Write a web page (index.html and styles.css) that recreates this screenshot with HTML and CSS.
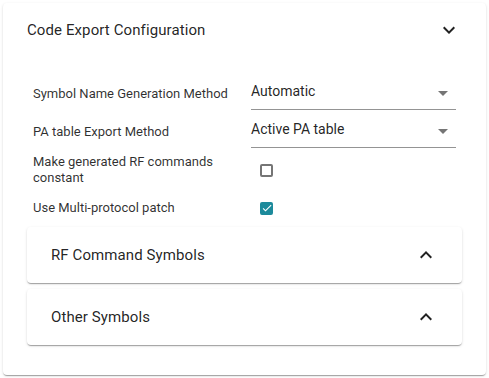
FILE: index.html
```html
<!DOCTYPE html>
<html>
<head>
<meta charset="utf-8">
<link rel="stylesheet" href="styles.css">
</head>
<body>
<div class="card">
  <div class="summary">
    <span class="title">Code Export Configuration</span>
    <svg class="chev" viewBox="0 0 24 24"><path d="M16.59 8.59 12 13.17 7.41 8.59 6 10l6 6 6-6z"/></svg>
  </div>
  <div class="details">
    <div class="form">
      <div class="label">Symbol Name Generation Method</div>
      <div class="select"><span>Automatic</span><svg class="arrow" viewBox="0 0 24 24"><path d="M7 10l5 5 5-5z"/></svg></div>
      <div class="label">PA table Export Method</div>
      <div class="select"><span>Active PA table</span><svg class="arrow" viewBox="0 0 24 24"><path d="M7 10l5 5 5-5z"/></svg></div>
      <div class="label two">Make generated RF commands constant</div>
      <div class="check-cell"><span class="box"></span></div>
      <div class="label">Use Multi-protocol patch</div>
      <div class="check-cell"><span class="box checked"><svg viewBox="0 0 24 24"><path d="M9 16.17 4.83 12l-1.42 1.41L9 19 21 7l-1.41-1.41z"/></svg></span></div>
    </div>
    <div class="sub">
      <span class="title">RF Command Symbols</span>
      <svg class="chev" viewBox="0 0 24 24"><path d="M12 8l-6 6 1.41 1.41L12 10.83l4.59 4.58L18 14z"/></svg>
    </div>
    <div class="sub">
      <span class="title">Other Symbols</span>
      <svg class="chev" viewBox="0 0 24 24"><path d="M12 8l-6 6 1.41 1.41L12 10.83l4.59 4.58L18 14z"/></svg>
    </div>
  </div>
</div>
</body>
</html>
```
FILE: styles.css
```css
html, body {
  margin: 0;
  background: #fff;
}
body {
  padding: 3px;
  font-family: Roboto, "Liberation Sans", sans-serif;
  color: rgba(0,0,0,0.87);
}
.card {
  width: 483px;
  height: 372px;
  box-sizing: border-box;
  border-radius: 4px;
  background: #fff;
  box-shadow: 0 2px 1px -1px rgba(0,0,0,0.2), 0 1px 1px 0 rgba(0,0,0,0.14), 0 1px 3px 0 rgba(0,0,0,0.12);
}
.summary {
  height: 54px;
  display: flex;
  align-items: center;
  justify-content: space-between;
  padding: 0 25px 0 24px;
}
.title {
  font-size: 15px;
  letter-spacing: 0.1px;
}
.chev {
  width: 24px;
  height: 24px;
  fill: rgba(0,0,0,0.87);
}
.details {
  padding: 18px 24px 30px 24px;
}
.form {
  display: grid;
  grid-template-columns: 218px 205px;
  padding-left: 6px;
  padding-right: 6px;
  align-items: center;
}
.label {
  font-size: 13px;
  line-height: 16px;
  color: rgba(0,0,0,0.82);
}
.select {
  height: 35px;
  box-sizing: border-box;
  border-bottom: 1px solid rgba(0,0,0,0.42);
  display: flex;
  align-items: center;
  justify-content: space-between;
  font-size: 14px;
  margin-bottom: 3px;
}
.select span {
  margin-top: -3px;
}
.arrow {
  width: 24px;
  height: 24px;
  fill: rgba(0,0,0,0.54);
  margin-right: 1px;
  margin-top: 2px;
}
.check-cell {
  height: 38px;
  display: flex;
  align-items: center;
  padding-left: 9px;
}
.box {
  width: 13px;
  height: 13px;
  box-sizing: border-box;
  border: 2px solid rgba(0,0,0,0.54);
  border-radius: 2px;
  display: flex;
  align-items: center;
  justify-content: center;
}
.box.checked {
  background: #1c8a9b;
  border-color: #1c8a9b;
}
.box.checked svg {
  width: 12px;
  height: 12px;
  fill: #fff;
  flex: none;
}
.sub {
  height: 56px;
  margin-top: 6px;
  border-radius: 4px;
  display: flex;
  align-items: center;
  justify-content: space-between;
  padding: 0 24px;
  box-shadow: 0 2px 1px -1px rgba(0,0,0,0.2), 0 1px 1px 0 rgba(0,0,0,0.14), 0 1px 3px 0 rgba(0,0,0,0.12);
}
.form + .sub {
  margin-top: 0;
}
```
